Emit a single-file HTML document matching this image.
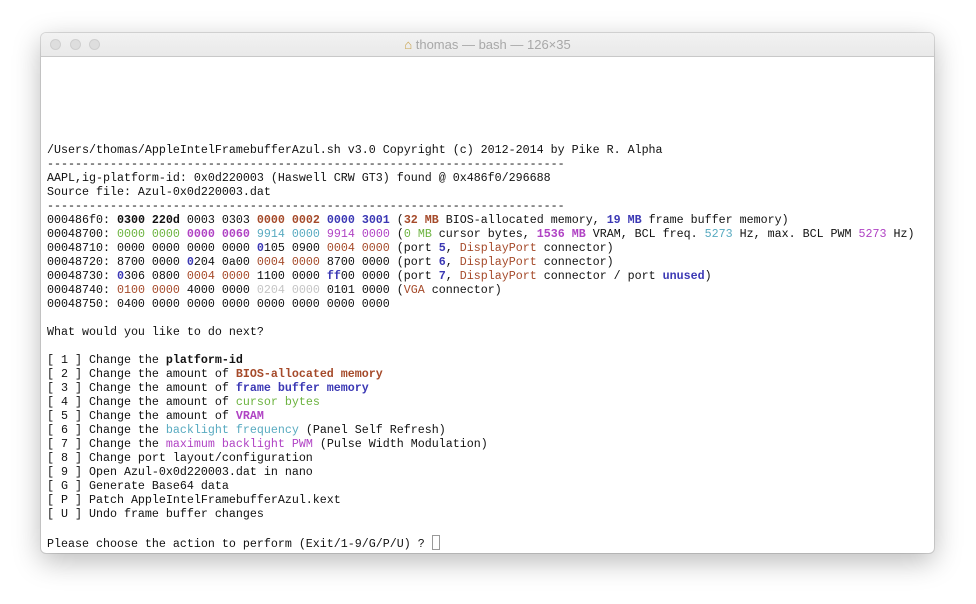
<!DOCTYPE html>
<html><head><meta charset="utf-8"><style>
html,body{margin:0;padding:0;width:976px;height:604px;background:#fff;overflow:hidden}
.win{position:absolute;left:41px;top:33px;width:893px;height:520px;border-radius:5px;background:#fff;box-shadow:0 8px 28px rgba(0,0,0,0.28),0 0 0 1px rgba(0,0,0,0.12);overflow:hidden}
.tb{position:absolute;left:0;top:0;width:100%;height:23px;background:linear-gradient(#f2f2f2,#e9e9e9);border-bottom:1px solid #c8c8c8}
.dot{position:absolute;top:6px;width:11px;height:11px;border-radius:50%;background:#dedede;border:1px solid #cfcfcf;box-sizing:border-box}
.title{position:absolute;left:0;width:100%;top:4px;text-align:center;font:13px "Liberation Sans",sans-serif;color:#a8a8a8}
pre{position:absolute;left:6px;top:110px;margin:0;font:11.67px/14px "Liberation Mono",monospace;color:#111;letter-spacing:0}
b{font-weight:bold}
.r{color:#a54a2a}.bl{color:#3b38b4}.g{color:#6cb33f}.m{color:#b043c4}.c{color:#58aac0}.gr{color:#c4c4c4}
.cur{display:inline-block;width:6px;height:13px;border:1px solid #999;vertical-align:-3px}
</style></head><body>
<div class="win">
<div class="tb">
<div class="dot" style="left:9px"></div><div class="dot" style="left:29px"></div><div class="dot" style="left:48px"></div>
<div class="title"><span style="color:#c9a24a">⌂</span> thomas — bash — 126×35</div>
</div>
<pre>/Users/thomas/AppleIntelFramebufferAzul.sh v3.0 Copyright (c) 2012-2014 by Pike R. Alpha
--------------------------------------------------------------------------
AAPL,ig-platform-id: 0x0d220003 (Haswell CRW GT3) found @ 0x486f0/296688
Source file: Azul-0x0d220003.dat
--------------------------------------------------------------------------
000486f0: <b>0300 220d</b> 0003 0303 <b class="r">0000 0002</b> <b class="bl">0000 3001</b> (<b class="r">32 MB</b> BIOS-allocated memory, <b class="bl">19 MB</b> frame buffer memory)
00048700: <span class="g">0000 0000</span> <b class="m">0000 0060</b> <span class="c">9914 0000</span> <span class="m">9914 0000</span> (<span class="g">0 MB</span> cursor bytes, <b class="m">1536 MB</b> VRAM, BCL freq. <span class="c">5273</span> Hz, max. BCL PWM <span class="m">5273</span> Hz)
00048710: 0000 0000 0000 0000 <b class="bl">0</b>105 0900 <span class="r">0004 0000</span> (port <b class="bl">5</b>, <span class="r">DisplayPort</span> connector)
00048720: 8700 0000 <b class="bl">0</b>204 0a00 <span class="r">0004 0000</span> 8700 0000 (port <b class="bl">6</b>, <span class="r">DisplayPort</span> connector)
00048730: <b class="bl">0</b>306 0800 <span class="r">0004 0000</span> 1100 0000 <b class="bl">ff</b>00 0000 (port <b class="bl">7</b>, <span class="r">DisplayPort</span> connector / port <b class="bl">unused</b>)
00048740: <span class="r">0100 0000</span> 4000 0000 <span class="gr">0204 0000</span> 0101 0000 (<span class="r">VGA</span> connector)
00048750: 0400 0000 0000 0000 0000 0000 0000 0000

What would you like to do next?

[ 1 ] Change the <b>platform-id</b>
[ 2 ] Change the amount of <b class="r">BIOS-allocated memory</b>
[ 3 ] Change the amount of <b class="bl">frame buffer memory</b>
[ 4 ] Change the amount of <span class="g">cursor bytes</span>
[ 5 ] Change the amount of <b class="m">VRAM</b>
[ 6 ] Change the <span class="c">backlight frequency</span> (Panel Self Refresh)
[ 7 ] Change the <span class="m">maximum backlight PWM</span> (Pulse Width Modulation)
[ 8 ] Change port layout/configuration
[ 9 ] Open Azul-0x0d220003.dat in nano
[ G ] Generate Base64 data
[ P ] Patch AppleIntelFramebufferAzul.kext
[ U ] Undo frame buffer changes

Please choose the action to perform (Exit/1-9/G/P/U) ? <span class="cur"></span></pre>
</div>
</body></html>
